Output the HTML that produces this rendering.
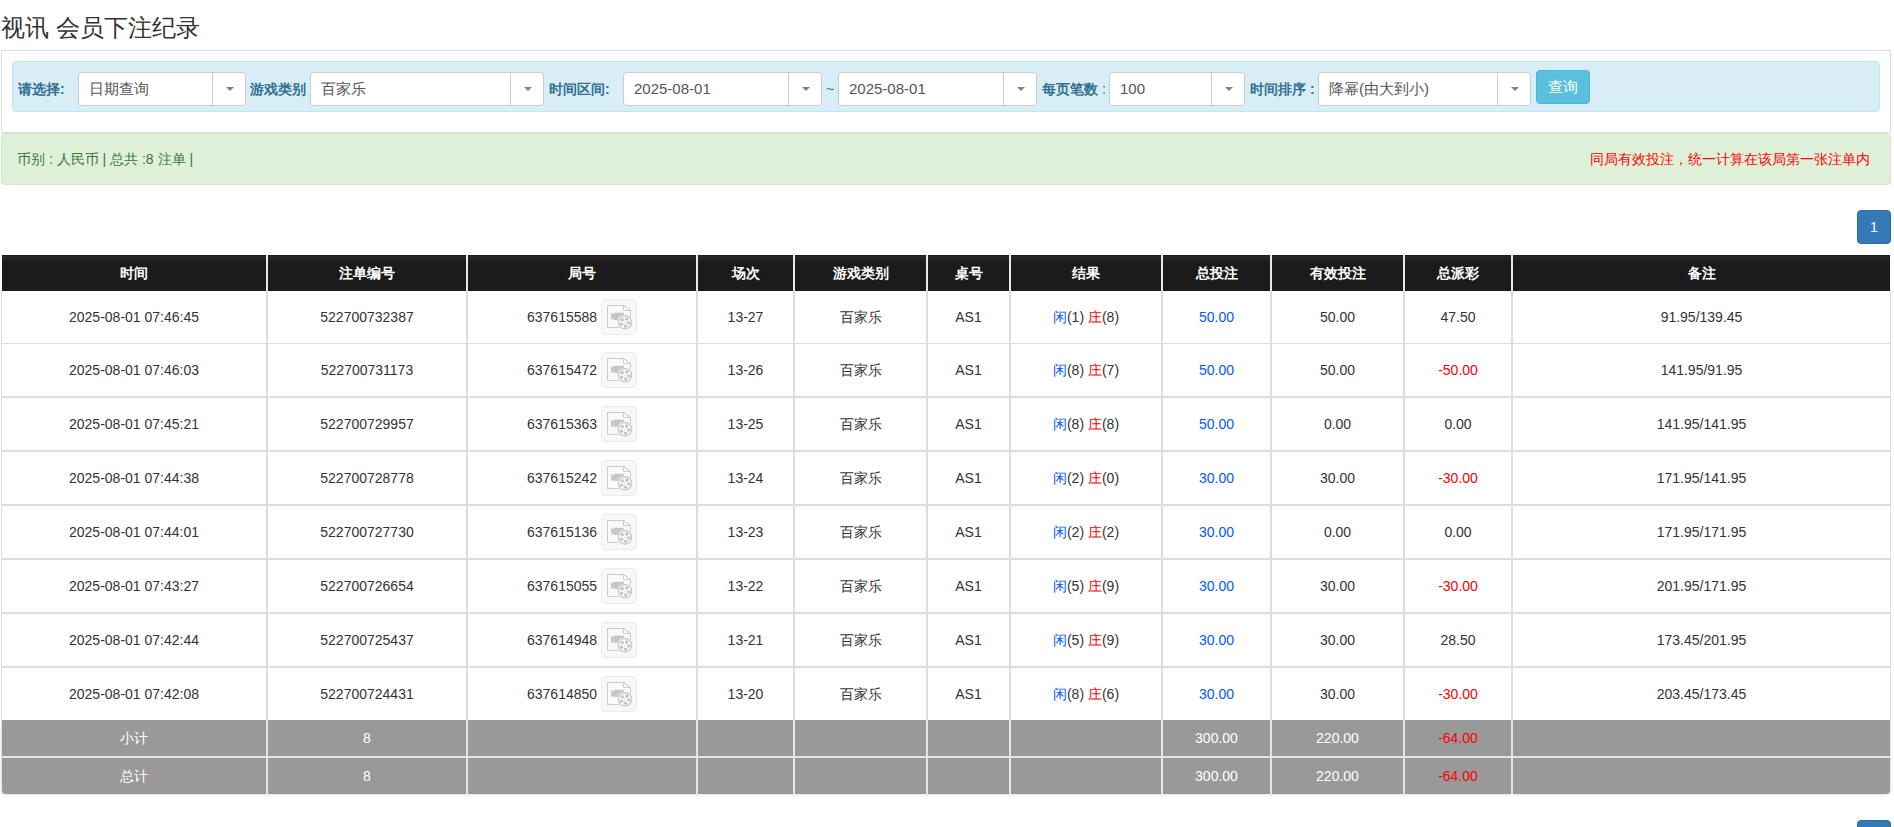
<!DOCTYPE html>
<html><head><meta charset="utf-8">
<style>
*{box-sizing:border-box}
html,body{margin:0;padding:0;background:#fff}
body{font-family:"Liberation Sans",sans-serif;font-size:14px;color:#333;width:1894px;height:827px;overflow:hidden;position:relative}
.abs{position:absolute}
.title{left:1px;top:11px;font-size:24px;line-height:34px;color:#333;white-space:nowrap}
.panel{left:1px;top:50px;width:1890px;height:83px;border:1px solid #ddd;background:#fff}
.form{left:12px;top:61px;width:1868px;height:51px;border:1px solid #bce8f1;background:#d9edf7;border-radius:4px}
.lbl{font-weight:bold;color:#31708f;top:72px;line-height:34px;white-space:nowrap}
.sel{top:72px;height:34px;border:1px solid #ccc;border-radius:4px;background:#fff;color:#555;font-size:15px;line-height:32px;padding-left:10px;white-space:nowrap}
.sel .dv{position:absolute;top:-1px;bottom:-1px;right:32px;width:1px;background:#ccc}
.sel .car{position:absolute;right:11px;top:14px;width:0;height:0;border-left:4px solid transparent;border-right:4px solid transparent;border-top:4px solid #808080}
.btn{left:1536px;top:70px;width:54px;height:34px;background:#5bc0de;border:1px solid #46b8da;border-radius:4px;color:#fff;font-size:15px;text-align:center;line-height:32px}
.alert{left:1px;top:133px;width:1890px;height:52px;border:1px solid #d6e9c6;background:#dff0d8;border-radius:4px}
.al1{left:17px;top:149px;line-height:20px;color:#3c763d;white-space:nowrap}
.al2{left:1590px;top:149px;line-height:20px;color:#f00;white-space:nowrap}
.pg{left:1857px;width:34px;height:34px;background:#337ab7;border:1px solid #2e6da4;border-radius:4px;color:#fff;text-align:center;line-height:32px}
table{position:absolute;left:1px;top:255px;border-collapse:collapse;table-layout:fixed;width:1890px}
td,th{padding:0;text-align:center;white-space:nowrap}
th{background:#1b1b1b;color:#fff;font-weight:bold;height:36px}

.th{top:255px;height:36px;line-height:36px;background:linear-gradient(#1b1b1b 0,#1b1b1b 1px,#2a2a2a 1px,#1e1e1e 5px,#1b1b1b 8px);color:#fff;font-weight:bold;text-align:center;white-space:nowrap}
.td{background:#fff;text-align:center;white-space:nowrap;color:#333}
.tg{height:36px;line-height:36px;background:#999;color:#fff;text-align:center;white-space:nowrap}
.b{color:#0059ff}
.r{color:#f00}
.vi{display:inline-block;vertical-align:middle;margin-top:-2px}
</style></head><body>
<div class="abs title">视讯 会员下注纪录</div>
<div class="abs panel"></div>
<div class="abs form"></div>
<div class="abs lbl" style="left:18px">请选择:</div>
<div class="abs sel" style="left:78px;width:168px">日期查询<span class="dv"></span><span class="car"></span></div>
<div class="abs lbl" style="left:250px">游戏类别</div>
<div class="abs sel" style="left:310px;width:234px">百家乐<span class="dv"></span><span class="car"></span></div>
<div class="abs lbl" style="left:549px">时间区间:</div>
<div class="abs sel" style="left:623px;width:199px">2025-08-01<span class="dv"></span><span class="car"></span></div>
<div class="abs" style="left:826px;top:72px;line-height:34px;color:#31708f">~</div>
<div class="abs sel" style="left:838px;width:199px">2025-08-01<span class="dv"></span><span class="car"></span></div>
<div class="abs lbl" style="left:1042px">每页笔数 <span style="font-weight:normal">:</span></div>
<div class="abs sel" style="left:1109px;width:136px">100<span class="dv"></span><span class="car"></span></div>
<div class="abs lbl" style="left:1250px">时间排序 :</div>
<div class="abs sel" style="left:1318px;width:213px">降幂(由大到小)<span class="dv"></span><span class="car"></span></div>
<div class="abs btn">查询</div>
<div class="abs alert"></div>
<div class="abs al1">币别 : 人民币 | 总共 :8 注单 |</div>
<div class="abs al2">同局有效投注，统一计算在该局第一张注单内</div>
<div class="abs pg" style="top:210px">1</div>
<div class="abs pg" style="top:820px"></div>
<svg width="0" height="0" style="position:absolute"><defs><g id="vid">
<rect x="0.5" y="0.5" width="35" height="35" rx="4" fill="#f8f8f8" stroke="#ebebeb"/>
<path d="M6.5 6.5H22.5L29.5 11.5V28.5H6.5Z" fill="#f9f9f9" stroke="#cbcbcb"/>
<path d="M22.5 6.5V11.5H29.5Z" fill="#fdfdfd" stroke="#cbcbcb" stroke-linejoin="miter"/>
<path d="M10.1 13.9L12.9 15.2V13.8H23V20.9H12.9V19.5L10.1 20.9Z" fill="#c6c6c6"/>
<circle cx="24.0" cy="23.4" r="8" fill="#f9f9f9"/>
<circle cx="24.0" cy="23.4" r="6.7" fill="#f9f9f9" stroke="#c6c6c6" stroke-width="1.2"/>
<circle cx="27.85" cy="24.01" r="1.7" fill="#c4c4c4"/><circle cx="24.61" cy="27.25" r="1.7" fill="#c4c4c4"/><circle cx="20.53" cy="25.17" r="1.7" fill="#c4c4c4"/><circle cx="21.24" cy="20.64" r="1.7" fill="#c4c4c4"/><circle cx="25.77" cy="19.93" r="1.7" fill="#c4c4c4"/>
<circle cx="24.0" cy="23.4" r="0.6" fill="#d0d0d0"/>
</g></defs></svg>
<div class="abs" style="left:1px;top:291px;width:1890px;height:429px;background:#ddd"></div>
<div class="abs" style="left:1px;top:720px;width:1890px;height:74px;background:#e4e4e4;border-radius:0 0 4px 4px;box-shadow:0 1px 2px rgba(0,0,0,.12)"></div>
<div class="abs" style="left:2px;top:255px;width:1888px;height:36px;background:#e8e8e8"></div>
<div class="abs th" style="left:2px;width:264px">时间</div>
<div class="abs th" style="left:268px;width:198px">注单编号</div>
<div class="abs th" style="left:468px;width:228px">局号</div>
<div class="abs th" style="left:698px;width:95px">场次</div>
<div class="abs th" style="left:795px;width:131px">游戏类别</div>
<div class="abs th" style="left:928px;width:81px">桌号</div>
<div class="abs th" style="left:1011px;width:150px">结果</div>
<div class="abs th" style="left:1163px;width:107px">总投注</div>
<div class="abs th" style="left:1272px;width:131px">有效投注</div>
<div class="abs th" style="left:1405px;width:106px">总派彩</div>
<div class="abs th" style="left:1513px;width:377px">备注</div>
<div class="abs td" style="left:2px;top:291px;width:264px;height:52px;line-height:52px">2025-08-01 07:46:45</div>
<div class="abs td" style="left:268px;top:291px;width:198px;height:52px;line-height:52px">522700732387</div>
<div class="abs td" style="left:468px;top:291px;width:228px;height:52px;line-height:52px">637615588 <svg class="vi" width="36" height="36" viewBox="0 0 36 36"><use href="#vid"/></svg></div>
<div class="abs td" style="left:698px;top:291px;width:95px;height:52px;line-height:52px">13-27</div>
<div class="abs td" style="left:795px;top:291px;width:131px;height:52px;line-height:52px">百家乐</div>
<div class="abs td" style="left:928px;top:291px;width:81px;height:52px;line-height:52px">AS1</div>
<div class="abs td" style="left:1011px;top:291px;width:150px;height:52px;line-height:52px"><span class="b">闲</span>(1) <span class="r">庄</span>(8)</div>
<div class="abs td" style="left:1163px;top:291px;width:107px;height:52px;line-height:52px"><span class="b">50.00</span></div>
<div class="abs td" style="left:1272px;top:291px;width:131px;height:52px;line-height:52px">50.00</div>
<div class="abs td" style="left:1405px;top:291px;width:106px;height:52px;line-height:52px">47.50</div>
<div class="abs td" style="left:1513px;top:291px;width:377px;height:52px;line-height:52px">91.95/139.45</div>
<div class="abs td" style="left:2px;top:344px;width:264px;height:52px;line-height:52px">2025-08-01 07:46:03</div>
<div class="abs td" style="left:268px;top:344px;width:198px;height:52px;line-height:52px">522700731173</div>
<div class="abs td" style="left:468px;top:344px;width:228px;height:52px;line-height:52px">637615472 <svg class="vi" width="36" height="36" viewBox="0 0 36 36"><use href="#vid"/></svg></div>
<div class="abs td" style="left:698px;top:344px;width:95px;height:52px;line-height:52px">13-26</div>
<div class="abs td" style="left:795px;top:344px;width:131px;height:52px;line-height:52px">百家乐</div>
<div class="abs td" style="left:928px;top:344px;width:81px;height:52px;line-height:52px">AS1</div>
<div class="abs td" style="left:1011px;top:344px;width:150px;height:52px;line-height:52px"><span class="b">闲</span>(8) <span class="r">庄</span>(7)</div>
<div class="abs td" style="left:1163px;top:344px;width:107px;height:52px;line-height:52px"><span class="b">50.00</span></div>
<div class="abs td" style="left:1272px;top:344px;width:131px;height:52px;line-height:52px">50.00</div>
<div class="abs td" style="left:1405px;top:344px;width:106px;height:52px;line-height:52px"><span class="r">-50.00</span></div>
<div class="abs td" style="left:1513px;top:344px;width:377px;height:52px;line-height:52px">141.95/91.95</div>
<div class="abs td" style="left:2px;top:398px;width:264px;height:52px;line-height:52px">2025-08-01 07:45:21</div>
<div class="abs td" style="left:268px;top:398px;width:198px;height:52px;line-height:52px">522700729957</div>
<div class="abs td" style="left:468px;top:398px;width:228px;height:52px;line-height:52px">637615363 <svg class="vi" width="36" height="36" viewBox="0 0 36 36"><use href="#vid"/></svg></div>
<div class="abs td" style="left:698px;top:398px;width:95px;height:52px;line-height:52px">13-25</div>
<div class="abs td" style="left:795px;top:398px;width:131px;height:52px;line-height:52px">百家乐</div>
<div class="abs td" style="left:928px;top:398px;width:81px;height:52px;line-height:52px">AS1</div>
<div class="abs td" style="left:1011px;top:398px;width:150px;height:52px;line-height:52px"><span class="b">闲</span>(8) <span class="r">庄</span>(8)</div>
<div class="abs td" style="left:1163px;top:398px;width:107px;height:52px;line-height:52px"><span class="b">50.00</span></div>
<div class="abs td" style="left:1272px;top:398px;width:131px;height:52px;line-height:52px">0.00</div>
<div class="abs td" style="left:1405px;top:398px;width:106px;height:52px;line-height:52px">0.00</div>
<div class="abs td" style="left:1513px;top:398px;width:377px;height:52px;line-height:52px">141.95/141.95</div>
<div class="abs td" style="left:2px;top:452px;width:264px;height:52px;line-height:52px">2025-08-01 07:44:38</div>
<div class="abs td" style="left:268px;top:452px;width:198px;height:52px;line-height:52px">522700728778</div>
<div class="abs td" style="left:468px;top:452px;width:228px;height:52px;line-height:52px">637615242 <svg class="vi" width="36" height="36" viewBox="0 0 36 36"><use href="#vid"/></svg></div>
<div class="abs td" style="left:698px;top:452px;width:95px;height:52px;line-height:52px">13-24</div>
<div class="abs td" style="left:795px;top:452px;width:131px;height:52px;line-height:52px">百家乐</div>
<div class="abs td" style="left:928px;top:452px;width:81px;height:52px;line-height:52px">AS1</div>
<div class="abs td" style="left:1011px;top:452px;width:150px;height:52px;line-height:52px"><span class="b">闲</span>(2) <span class="r">庄</span>(0)</div>
<div class="abs td" style="left:1163px;top:452px;width:107px;height:52px;line-height:52px"><span class="b">30.00</span></div>
<div class="abs td" style="left:1272px;top:452px;width:131px;height:52px;line-height:52px">30.00</div>
<div class="abs td" style="left:1405px;top:452px;width:106px;height:52px;line-height:52px"><span class="r">-30.00</span></div>
<div class="abs td" style="left:1513px;top:452px;width:377px;height:52px;line-height:52px">171.95/141.95</div>
<div class="abs td" style="left:2px;top:506px;width:264px;height:52px;line-height:52px">2025-08-01 07:44:01</div>
<div class="abs td" style="left:268px;top:506px;width:198px;height:52px;line-height:52px">522700727730</div>
<div class="abs td" style="left:468px;top:506px;width:228px;height:52px;line-height:52px">637615136 <svg class="vi" width="36" height="36" viewBox="0 0 36 36"><use href="#vid"/></svg></div>
<div class="abs td" style="left:698px;top:506px;width:95px;height:52px;line-height:52px">13-23</div>
<div class="abs td" style="left:795px;top:506px;width:131px;height:52px;line-height:52px">百家乐</div>
<div class="abs td" style="left:928px;top:506px;width:81px;height:52px;line-height:52px">AS1</div>
<div class="abs td" style="left:1011px;top:506px;width:150px;height:52px;line-height:52px"><span class="b">闲</span>(2) <span class="r">庄</span>(2)</div>
<div class="abs td" style="left:1163px;top:506px;width:107px;height:52px;line-height:52px"><span class="b">30.00</span></div>
<div class="abs td" style="left:1272px;top:506px;width:131px;height:52px;line-height:52px">0.00</div>
<div class="abs td" style="left:1405px;top:506px;width:106px;height:52px;line-height:52px">0.00</div>
<div class="abs td" style="left:1513px;top:506px;width:377px;height:52px;line-height:52px">171.95/171.95</div>
<div class="abs td" style="left:2px;top:560px;width:264px;height:52px;line-height:52px">2025-08-01 07:43:27</div>
<div class="abs td" style="left:268px;top:560px;width:198px;height:52px;line-height:52px">522700726654</div>
<div class="abs td" style="left:468px;top:560px;width:228px;height:52px;line-height:52px">637615055 <svg class="vi" width="36" height="36" viewBox="0 0 36 36"><use href="#vid"/></svg></div>
<div class="abs td" style="left:698px;top:560px;width:95px;height:52px;line-height:52px">13-22</div>
<div class="abs td" style="left:795px;top:560px;width:131px;height:52px;line-height:52px">百家乐</div>
<div class="abs td" style="left:928px;top:560px;width:81px;height:52px;line-height:52px">AS1</div>
<div class="abs td" style="left:1011px;top:560px;width:150px;height:52px;line-height:52px"><span class="b">闲</span>(5) <span class="r">庄</span>(9)</div>
<div class="abs td" style="left:1163px;top:560px;width:107px;height:52px;line-height:52px"><span class="b">30.00</span></div>
<div class="abs td" style="left:1272px;top:560px;width:131px;height:52px;line-height:52px">30.00</div>
<div class="abs td" style="left:1405px;top:560px;width:106px;height:52px;line-height:52px"><span class="r">-30.00</span></div>
<div class="abs td" style="left:1513px;top:560px;width:377px;height:52px;line-height:52px">201.95/171.95</div>
<div class="abs td" style="left:2px;top:614px;width:264px;height:52px;line-height:52px">2025-08-01 07:42:44</div>
<div class="abs td" style="left:268px;top:614px;width:198px;height:52px;line-height:52px">522700725437</div>
<div class="abs td" style="left:468px;top:614px;width:228px;height:52px;line-height:52px">637614948 <svg class="vi" width="36" height="36" viewBox="0 0 36 36"><use href="#vid"/></svg></div>
<div class="abs td" style="left:698px;top:614px;width:95px;height:52px;line-height:52px">13-21</div>
<div class="abs td" style="left:795px;top:614px;width:131px;height:52px;line-height:52px">百家乐</div>
<div class="abs td" style="left:928px;top:614px;width:81px;height:52px;line-height:52px">AS1</div>
<div class="abs td" style="left:1011px;top:614px;width:150px;height:52px;line-height:52px"><span class="b">闲</span>(5) <span class="r">庄</span>(9)</div>
<div class="abs td" style="left:1163px;top:614px;width:107px;height:52px;line-height:52px"><span class="b">30.00</span></div>
<div class="abs td" style="left:1272px;top:614px;width:131px;height:52px;line-height:52px">30.00</div>
<div class="abs td" style="left:1405px;top:614px;width:106px;height:52px;line-height:52px">28.50</div>
<div class="abs td" style="left:1513px;top:614px;width:377px;height:52px;line-height:52px">173.45/201.95</div>
<div class="abs td" style="left:2px;top:668px;width:264px;height:52px;line-height:52px">2025-08-01 07:42:08</div>
<div class="abs td" style="left:268px;top:668px;width:198px;height:52px;line-height:52px">522700724431</div>
<div class="abs td" style="left:468px;top:668px;width:228px;height:52px;line-height:52px">637614850 <svg class="vi" width="36" height="36" viewBox="0 0 36 36"><use href="#vid"/></svg></div>
<div class="abs td" style="left:698px;top:668px;width:95px;height:52px;line-height:52px">13-20</div>
<div class="abs td" style="left:795px;top:668px;width:131px;height:52px;line-height:52px">百家乐</div>
<div class="abs td" style="left:928px;top:668px;width:81px;height:52px;line-height:52px">AS1</div>
<div class="abs td" style="left:1011px;top:668px;width:150px;height:52px;line-height:52px"><span class="b">闲</span>(8) <span class="r">庄</span>(6)</div>
<div class="abs td" style="left:1163px;top:668px;width:107px;height:52px;line-height:52px"><span class="b">30.00</span></div>
<div class="abs td" style="left:1272px;top:668px;width:131px;height:52px;line-height:52px">30.00</div>
<div class="abs td" style="left:1405px;top:668px;width:106px;height:52px;line-height:52px"><span class="r">-30.00</span></div>
<div class="abs td" style="left:1513px;top:668px;width:377px;height:52px;line-height:52px">203.45/173.45</div>
<div class="abs tg" style="left:2px;top:720px;width:264px;">小计</div>
<div class="abs tg" style="left:268px;top:720px;width:198px;">8</div>
<div class="abs tg" style="left:468px;top:720px;width:228px;"></div>
<div class="abs tg" style="left:698px;top:720px;width:95px;"></div>
<div class="abs tg" style="left:795px;top:720px;width:131px;"></div>
<div class="abs tg" style="left:928px;top:720px;width:81px;"></div>
<div class="abs tg" style="left:1011px;top:720px;width:150px;"></div>
<div class="abs tg" style="left:1163px;top:720px;width:107px;">300.00</div>
<div class="abs tg" style="left:1272px;top:720px;width:131px;">220.00</div>
<div class="abs tg" style="left:1405px;top:720px;width:106px;"><span class="r">-64.00</span></div>
<div class="abs tg" style="left:1513px;top:720px;width:377px;"></div>
<div class="abs tg" style="left:2px;top:758px;width:264px;border-bottom-left-radius:4px;">总计</div>
<div class="abs tg" style="left:268px;top:758px;width:198px;">8</div>
<div class="abs tg" style="left:468px;top:758px;width:228px;"></div>
<div class="abs tg" style="left:698px;top:758px;width:95px;"></div>
<div class="abs tg" style="left:795px;top:758px;width:131px;"></div>
<div class="abs tg" style="left:928px;top:758px;width:81px;"></div>
<div class="abs tg" style="left:1011px;top:758px;width:150px;"></div>
<div class="abs tg" style="left:1163px;top:758px;width:107px;">300.00</div>
<div class="abs tg" style="left:1272px;top:758px;width:131px;">220.00</div>
<div class="abs tg" style="left:1405px;top:758px;width:106px;"><span class="r">-64.00</span></div>
<div class="abs tg" style="left:1513px;top:758px;width:377px;border-bottom-right-radius:4px;"></div>
</body></html>
